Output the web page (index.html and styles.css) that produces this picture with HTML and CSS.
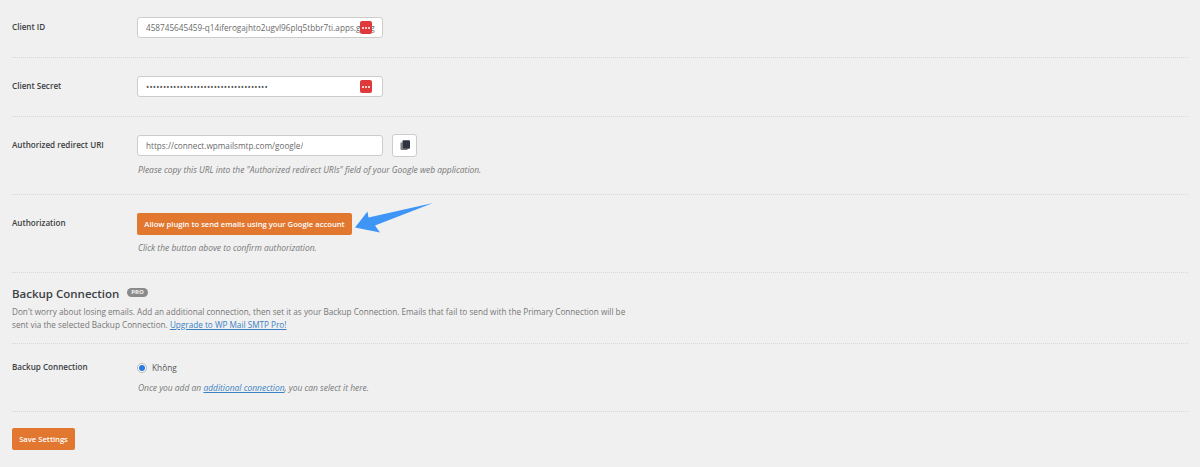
FILE: index.html
```html
<!DOCTYPE html>
<html lang="en">
<head>
<meta charset="utf-8">
<title>WP Mail SMTP Settings</title>
<link rel="stylesheet" href="styles.css">
</head>
<body>
<main class="page">
  <section class="row row-first">
    <div class="label">Client ID</div>
    <div class="field">
      <div class="input-line">
        <div class="input has-key"><span class="clip">458745645459-q14iferogajhto2ugvl96plq5tbbr7ti.apps.goog</span><span class="key"><i></i><i></i><i></i></span></div>
      </div>
    </div>
  </section>
  <section class="row">
    <div class="label">Client Secret</div>
    <div class="field">
      <div class="input-line">
        <div class="input has-key"><span class="clip secret">••••••••••••••••••••••••••••••••••••</span><span class="key"><i></i><i></i><i></i></span></div>
      </div>
    </div>
  </section>
  <section class="row row-uri">
    <div class="label">Authorized redirect URI</div>
    <div class="field">
      <div class="input-line">
        <div class="input"><span class="clip">https://connect.wpmailsmtp.com/google/</span></div>
        <div class="copy">
          <svg width="10" height="11" viewBox="0 0 10 11"><path fill="#7d7d7d" d="M0.5 2.5h2v6h5v1.5h-6a1 1 0 0 1-1-1z"/><path fill="#2f3440" d="M2.5 1.2a1 1 0 0 1 1-1h5.5a1 1 0 0 1 1 1v6.6a1 1 0 0 1-1 1h-5.5a1 1 0 0 1-1-1z"/></svg>
        </div>
      </div>
      <p class="desc desc-uri">Please copy this URL into the "Authorized redirect URIs" field of your Google web application.</p>
    </div>
  </section>
  <section class="row row-auth">
    <div class="label">Authorization</div>
    <div class="field">
      <div class="auth-line">
        <a class="btn btn-wide">Allow plugin to send emails using your Google account</a>
        <svg class="arrow" width="82" height="30" viewBox="0 0 82 30"><path fill="#3f95f5" d="M0 24.5L12.5 8.5L13.5 14.5L78 0L20 22.5L25 29.5z"/></svg>
      </div>
      <p class="desc desc-auth">Click the button above to confirm authorization.</p>
    </div>
  </section>
  <section class="backup-intro">
    <h2 class="title">Backup Connection <span class="pro">PRO</span></h2>
    <p class="intro">Don't worry about losing emails. Add an additional connection, then set it as your Backup Connection. Emails that fail to send with the Primary Connection will be<br>sent via the selected Backup Connection. <a class="link">Upgrade to WP Mail SMTP Pro!</a></p>
  </section>
  <section class="row row-backup">
    <div class="label">Backup Connection</div>
    <div class="field">
      <div class="radio-line"><span class="radio"></span><span class="radio-text">Không</span></div>
      <p class="desc desc-backup">Once you add an <a class="link">additional connection</a>, you can select it here.</p>
    </div>
  </section>
  <div class="actions"><a class="btn btn-save">Save Settings</a></div>
</main>
</body>
</html>
```
FILE: styles.css
```css
* { box-sizing: border-box; }
html, body { margin: 0; padding: 0; }
body {
  background: #f0f0f0;
  font-family: "Open Sans", "Noto Sans", sans-serif;
  font-size: 8.4px;
  color: #444;
  height: 467px;
  overflow: hidden;
}
.page { padding: 17px 12px 0; }
.row {
  display: flex;
  padding: 18px 0 19px;
  border-bottom: 1px dotted #d8d8d8;
}
.row-first { padding-top: 0; }
.row-uri { padding-bottom: 18px; }
.label {
  width: 125px;
  flex: none;
  font-weight: 600;
  color: #3c4043;
  font-size: 8.1px;
  line-height: 20px;
}
.input-line { display: flex; align-items: center; gap: 9px; }
.input {
  position: relative;
  width: 246px;
  height: 21px;
  padding: 0 7px 0 8px;
  background: #fff;
  border: 1px solid #ccc;
  border-radius: 3px;
  line-height: 19px;
  font-size: 8.2px;
  color: #6a6a6a;
  display: flex;
}
.clip { white-space: nowrap; overflow: hidden; }
.has-key .clip { flex: 1; }
.secret { color: #555; font-size: 8.5px; letter-spacing: 0.19px; }
.key {
  position: absolute;
  right: 10px;
  top: 3px;
  width: 12px;
  height: 13px;
  background: #e0393b;
  border-radius: 2px;
  display: flex;
  align-items: center;
  justify-content: center;
  gap: 1px;
}
.key i { width: 2px; height: 2px; border-radius: 50%; background: #fff; }
.copy {
  width: 25px;
  height: 23px;
  margin: -1px 0;
  background: #fff;
  border: 1px solid #ccc;
  border-radius: 3px;
  display: flex;
  align-items: center;
  justify-content: center;
}
.desc {
  margin: 0 0 0 1px;
  font-style: italic;
  font-size: 8.45px;
  line-height: 13px;
  color: #777;
}
.desc-uri { margin-top: 7px; }
.desc-auth { margin-top: 6px; }
.desc-backup { margin-top: 5px; }
.auth-line { display: flex; align-items: flex-start; position: relative; }
.btn {
  display: block;
  background: #e27730;
  color: #fff;
  font-weight: 600;
  border-radius: 2px;
  font-size: 7.65px;
  text-align: center;
  white-space: nowrap;
}
.btn-wide { width: 215px; height: 22px; line-height: 22px; }
.arrow { position: absolute; left: 218px; top: -10px; }
.row-auth { padding-bottom: 18px; }
.backup-intro { padding-top: 12px; padding-bottom: 12px; border-bottom: 1px dotted #d8d8d8; }
.title {
  margin: 0;
  font-size: 11.5px;
  font-weight: 600;
  line-height: 17px;
  color: #3c4043;
  display: flex;
  align-items: center;
  gap: 8px;
}
.pro {
  display: inline-block;
  background: #8a8a8a;
  color: #f4f4f4;
  font-size: 6px;
  font-weight: 700;
  line-height: 9px;
  padding: 0 4px;
  border-radius: 4.5px;
  margin-top: -3px;
}
.intro {
  margin: 3px 0 0;
  font-size: 8.2px;
  line-height: 13px;
  color: #777;
}
.link { color: #3b82c4; text-decoration: underline; }
.row-backup { padding: 15px 0 17px; }
.row-backup .label { line-height: 16px; }
.radio-line { display: flex; align-items: center; gap: 5px; height: 17px; }
.radio {
  width: 10px;
  height: 10px;
  border-radius: 50%;
  background: #fff;
  border: 1px solid #b9b9b9;
  display: flex;
  align-items: center;
  justify-content: center;
}
.radio::after {
  content: "";
  width: 6px;
  height: 6px;
  border-radius: 50%;
  background: #2a7ae2;
}
.radio-text { font-size: 8.3px; color: #555; }
.actions { padding-top: 16px; }
.btn-save { width: 63px; height: 22px; line-height: 22px; }
```
